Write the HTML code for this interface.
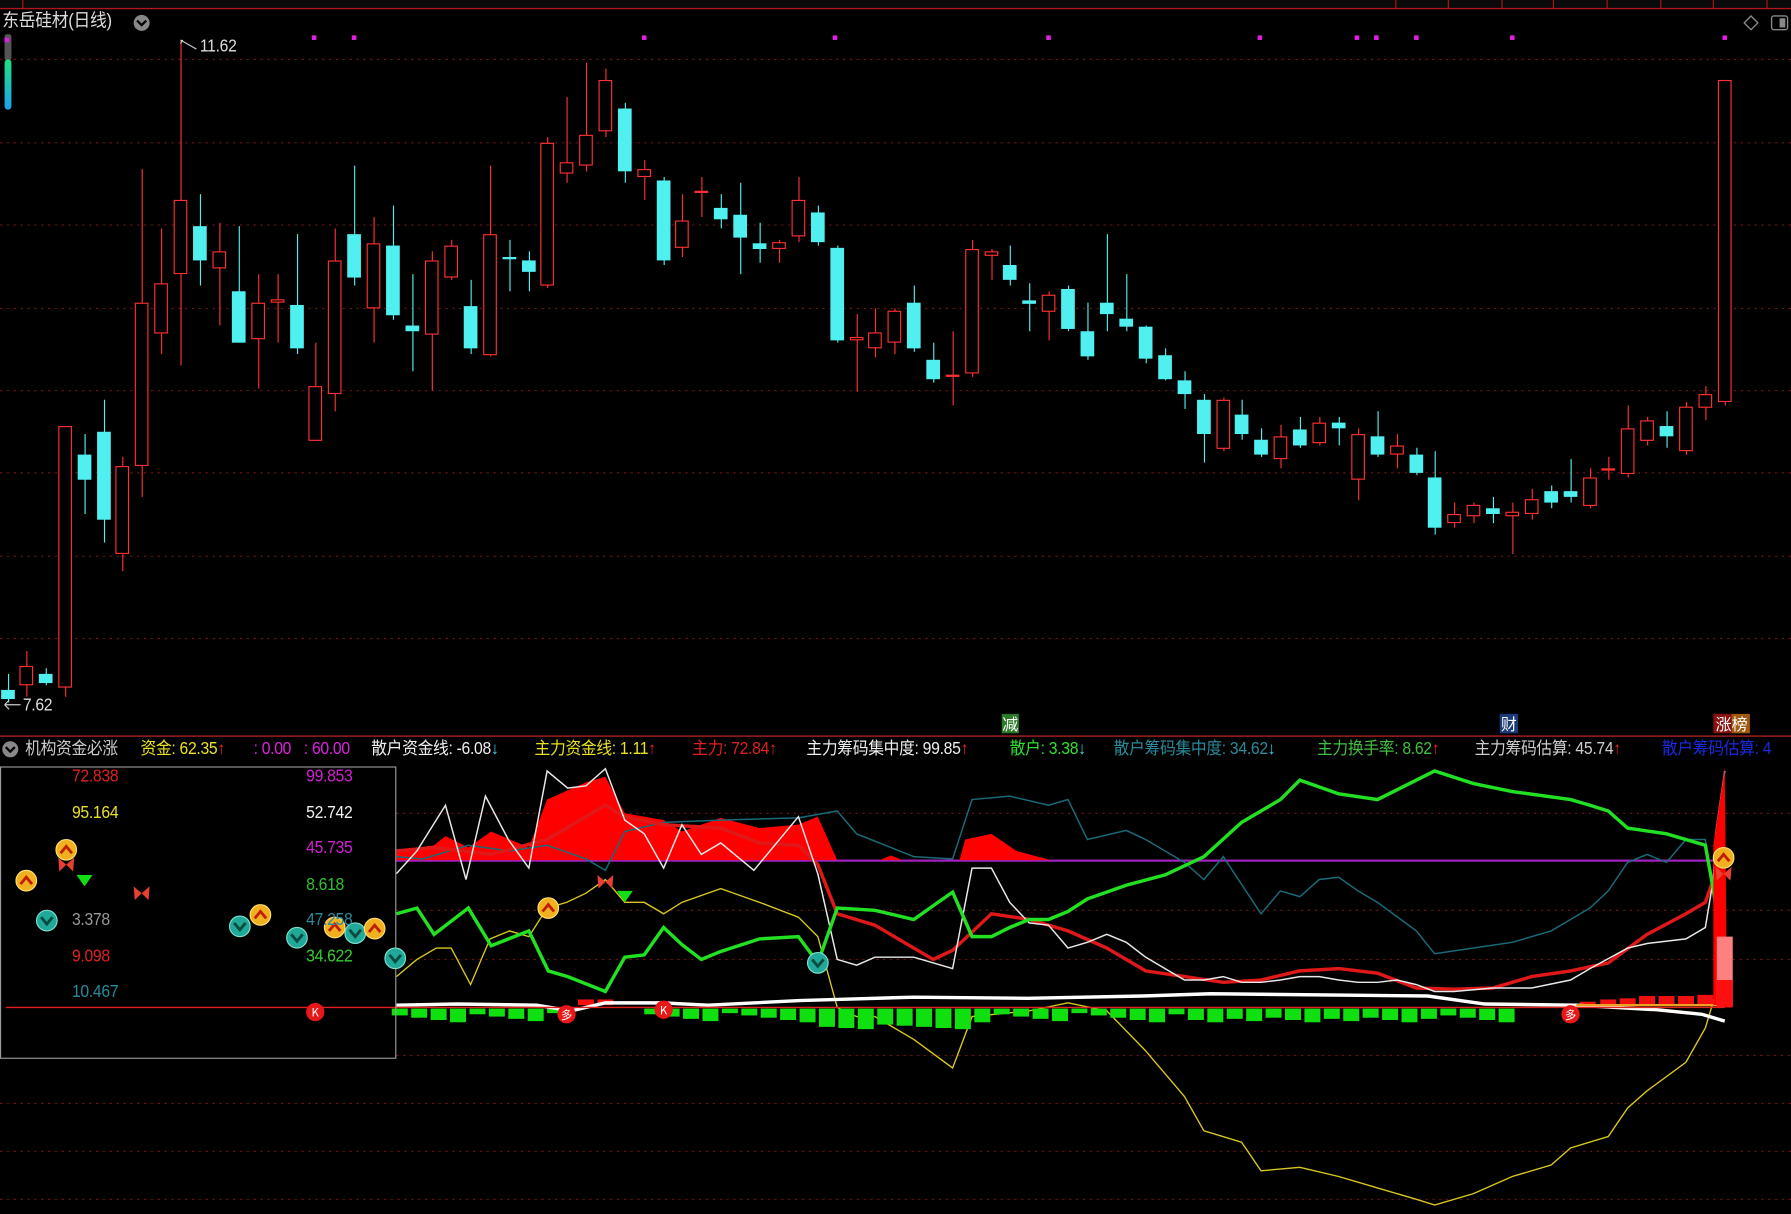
<!DOCTYPE html>
<html><head><meta charset="utf-8">
<style>
html,body{margin:0;padding:0;background:#000;width:1791px;height:1214px;overflow:hidden}
#w{position:absolute;left:0;top:0;width:1568px;height:1063px;transform:scale(1.14222);transform-origin:0 0;background:#000;font-family:"Liberation Sans","Noto Sans CJK SC",sans-serif}
.t{position:absolute;font-size:15px;white-space:nowrap;line-height:16px;letter-spacing:-0.3px;transform:scaleX(0.92);transform-origin:0 0}
svg{position:absolute;left:0;top:0}
</style></head><body>
<div id="w">
<svg id="s" width="1568" height="1063" viewBox="0 0 1568 1063">
<rect x="0" y="0" width="1568" height="7" fill="#0a0a0a"/>
<line x1="0" y1="7.5" x2="1568" y2="7.5" stroke="#b01818" stroke-width="1.2"/>
<g stroke="#b01818" stroke-width="1"><line x1="1222" y1="0" x2="1222" y2="7"/><line x1="1268" y1="0" x2="1268" y2="7"/><line x1="1315" y1="0" x2="1315" y2="7"/><line x1="1360" y1="0" x2="1360" y2="7"/><line x1="1407" y1="0" x2="1407" y2="7"/><line x1="1454" y1="0" x2="1454" y2="7"/><line x1="1500" y1="0" x2="1500" y2="7"/><line x1="1547" y1="0" x2="1547" y2="7"/><line x1="20" y1="0" x2="20" y2="7"/></g>
<g stroke="#6a1616" stroke-width="1" stroke-dasharray="2,4">
<line x1="0" y1="52" x2="1568" y2="52"/><line x1="0" y1="125" x2="1568" y2="125"/><line x1="0" y1="197" x2="1568" y2="197"/><line x1="0" y1="270" x2="1568" y2="270"/><line x1="0" y1="342" x2="1568" y2="342"/><line x1="0" y1="414" x2="1568" y2="414"/><line x1="0" y1="487" x2="1568" y2="487"/><line x1="0" y1="559" x2="1568" y2="559"/>
<line x1="347" y1="712" x2="1568" y2="712"/><line x1="347" y1="797" x2="1568" y2="797"/><line x1="347" y1="840" x2="1568" y2="840"/><line x1="347" y1="924" x2="1568" y2="924"/><line x1="0" y1="966" x2="1568" y2="966"/><line x1="0" y1="1008" x2="1568" y2="1008"/><line x1="0" y1="1050" x2="1568" y2="1050"/>
</g>
<line x1="0" y1="644.5" x2="1568" y2="644.5" stroke="#8a1a1a" stroke-width="1.5"/>
<defs><linearGradient id="gb" x1="0" y1="0" x2="0" y2="1"><stop offset="0" stop-color="#20e080"/><stop offset="1" stop-color="#20a0f0"/></linearGradient></defs>
<rect x="4" y="30" width="6" height="23" fill="#555" rx="2"/>
<rect x="4" y="52" width="6" height="44" fill="url(#gb)" rx="3"/>
<rect x="4" y="33" width="4" height="4" fill="#e020e0"/>
<g fill="#e020e0" id="md"></g>
<path d="M1533 14 L1539 20 L1533 26 L1527 20 Z" fill="none" stroke="#888" stroke-width="1.2"/>
<rect x="1551" y="14" width="14" height="12" rx="2" fill="none" stroke="#888" stroke-width="1.2"/><rect x="1558" y="16" width="5" height="8" fill="#888"/>
<g id="candles"></g>
<path d="M160 35 L158 38 M158 35 L172 43" stroke="#ccc" fill="none"/>
<path d="M4 617 L18 617 M4 617 L8 613 M4 617 L8 621" stroke="#ccc" fill="none"/>
<line x1="347" y1="753.5" x2="1510" y2="753.5" stroke="#a020c0" stroke-width="2"/>
<polygon fill="#ff0000" points="347,753 347,745 380,740 390,732 410,742 430,728 463,742 479,700 513,685 530,680 547,712 581,718 597,728 631,716 665,725 699,722 716,715 733,753 770,753 780,749 790,753 840,753 845,735 868,730 890,745 920,753"/>
<polyline fill="none" stroke="#1a6a78" stroke-width="1.3" points="347,750 370,752 410,740 446,745 479,740 513,752 530,762 547,728 581,720 631,718 699,716 733,710 750,730 800,750 834,752 851,700 884,697 918,705 935,700 952,735 986,727 1003,735 1020,745 1037,755 1054,770 1071,750 1104,800 1121,780 1138,785 1155,770 1172,768 1189,780 1206,790 1240,815 1256,835 1290,830 1324,825 1358,815 1375,805 1392,795 1408,780 1425,755 1442,748 1459,755 1476,735 1493,735 1502,800"/>
<polyline fill="none" stroke="#d8c820" stroke-width="1.2" points="347,855 365,840 382,830 395,830 412,862 429,822 446,815 463,820 479,795 496,790 513,782 530,770 547,790 564,790 581,800 597,790 631,778 665,790 699,803 716,820 733,882 750,890 766,890 800,910 834,935 851,890 901,885 935,878 969,885 1003,920 1020,940 1037,960 1054,990 1087,1000 1104,1025 1138,1022 1172,1030 1206,1040 1240,1050 1256,1055 1290,1045 1324,1030 1358,1020 1375,1005 1408,995 1425,970 1442,955 1476,930 1493,900 1502,870 1510,750"/>
<g id="hist"></g>
<polyline fill="none" stroke="#fff" stroke-width="3" points="347,880 400,879 470,880 500,885 530,878 580,878 620,880 700,876 733,875 800,873 900,874 1000,872 1060,870 1250,872 1300,879 1380,880 1450,884 1490,888 1510,894"/>
<line x1="5" y1="882" x2="1510" y2="882" stroke="#e02020" stroke-width="1.3"/>
<line x1="1380" y1="880" x2="1510" y2="880" stroke="#f0a020" stroke-width="2"/>
<polyline fill="none" stroke="#e01818" stroke-width="3" points="347,745 380,742 430,748 479,735 530,705 547,715 581,722 631,725 665,738 699,740 716,757 733,800 766,810 800,830 817,840 834,832 868,800 901,805 935,815 969,830 1003,850 1037,855 1071,860 1104,858 1138,850 1172,848 1206,852 1240,865 1273,866 1307,865 1341,855 1375,850 1408,843 1442,818 1476,800 1493,790 1500,770"/>
<polyline fill="none" stroke="#e8e8e8" stroke-width="1.3" points="347,765 365,745 390,705 408,770 425,697 445,735 463,760 479,675 497,690 513,688 530,673 547,718 564,730 581,760 597,722 614,748 631,738 660,762 699,715 716,765 733,840 750,845 766,838 800,838 834,848 851,760 868,760 884,790 901,808 918,810 935,830 952,825 969,818 986,825 1003,838 1020,848 1037,858 1054,858 1071,855 1087,860 1104,860 1121,858 1138,855 1155,855 1172,858 1189,860 1206,860 1223,858 1240,862 1256,868 1273,868 1307,865 1341,865 1375,858 1392,848 1425,830 1442,826 1476,822 1493,812 1500,770 1502,730 1510,675"/>
<polyline fill="none" stroke="#22e022" stroke-width="3" points="347,800 365,795 380,818 410,795 430,828 463,815 480,850 497,855 530,868 547,838 564,836 581,812 597,827 614,840 631,833 665,822 699,820 716,843 733,795 766,797 800,805 817,793 834,781 851,820 868,820 884,812 901,805 918,805 935,798 952,787 986,775 1020,766 1054,750 1087,720 1121,700 1138,683 1172,695 1206,700 1256,675 1290,686 1324,693 1375,700 1392,705 1408,710 1425,725 1459,730 1493,740 1502,790 1510,880"/>
<polygon fill="#ff0000" points="1500,880 1500,740 1510,672 1512,880"/>
<rect x="1503" y="820" width="14" height="60" fill="#ff8080"/><rect x="1503" y="858" width="14" height="24" fill="#ff1010"/>
<rect x="0.5" y="671.5" width="346" height="255" fill="none" stroke="#999" stroke-width="1"/>
<g id="mk"></g>
<rect x="877" y="625" width="15" height="17" fill="#2a7a2a"/><text x="884.5" y="639" font-size="14" fill="#fff" text-anchor="middle" font-family="Noto Sans CJK SC,sans-serif">减</text>
<rect x="1313" y="625" width="16" height="17" fill="#1a3a7a"/><text x="1321" y="639" font-size="14" fill="#fff" text-anchor="middle" font-family="Noto Sans CJK SC,sans-serif">财</text>
<rect x="1500" y="625" width="16" height="17" fill="#8a1010"/><rect x="1516" y="625" width="16" height="17" fill="#a05a10"/><text x="1516" y="639" font-size="14" fill="#fff" text-anchor="middle" font-family="Noto Sans CJK SC,sans-serif">涨榜</text>
<circle cx="9" cy="656" r="7" fill="#888"/><path d="M5 654 L9 658 L13 654" stroke="#000" stroke-width="2" fill="none"/>
<circle cx="124" cy="20" r="7" fill="#888"/><path d="M120 18 L124 22 L128 18" stroke="#000" stroke-width="2" fill="none"/>
</svg>
<div class="t" style="left:2px;top:11px;color:#ddd;font-size:16px">东岳硅材(日线)</div>
<div class="t" style="left:175px;top:33px;color:#ddd">11.62</div>
<div class="t" style="left:20px;top:610px;color:#ddd">7.62</div>
<div class="t" style="left:22px;top:648px;color:#ccc">机构资金必涨</div>
<div class="t" style="left:123px;top:648px;color:#e8e020">资金: 62.35<span style="color:#f02020">↑</span></div>
<div class="t" style="left:222px;top:648px;color:#e020e0">: 0.00</div>
<div class="t" style="left:266px;top:648px;color:#e020e0">: 60.00</div>
<div class="t" style="left:325px;top:648px;color:#eee">散户资金线: -6.08<span style="color:#40d0f0">↓</span></div>
<div class="t" style="left:468px;top:648px;color:#e8e020">主力资金线: 1.11<span style="color:#f02020">↑</span></div>
<div class="t" style="left:606px;top:648px;color:#e02020">主力: 72.84↑</div>
<div class="t" style="left:706px;top:648px;color:#eee">主力筹码集中度: 99.85<span style="color:#f02020">↑</span></div>
<div class="t" style="left:884px;top:648px;color:#30e030">散户: 3.38<span style="color:#40d0f0">↓</span></div>
<div class="t" style="left:975px;top:648px;color:#2a8a9a">散户筹码集中度: 34.62<span style="color:#40d0f0">↓</span></div>
<div class="t" style="left:1153px;top:648px;color:#40c040">主力换手率: 8.62<span style="color:#f02020">↑</span></div>
<div class="t" style="left:1291px;top:648px;color:#ccc">主力筹码估算: 45.74<span style="color:#f02020">↑</span></div>
<div class="t" style="left:1455px;top:648px;color:#1a2ae0">散户筹码估算: 4</div>
<div class="t" style="left:63px;top:672px;color:#e02020">72.838</div>
<div class="t" style="left:268px;top:672px;color:#d020d0">99.853</div>
<div class="t" style="left:63px;top:704px;color:#e8e020">95.164</div>
<div class="t" style="left:268px;top:704px;color:#eee">52.742</div>
<div class="t" style="left:268px;top:735px;color:#d020d0">45.735</div>
<div class="t" style="left:268px;top:767px;color:#30c030">8.618</div>
<div class="t" style="left:63px;top:798px;color:#999">3.378</div>
<div class="t" style="left:268px;top:798px;color:#2a8a9a">47.258</div>
<div class="t" style="left:63px;top:830px;color:#e02020">9.098</div>
<div class="t" style="left:268px;top:830px;color:#30d030">34.622</div>
<div class="t" style="left:63px;top:861px;color:#2a8a9a">10.467</div>
</div>
<script>
var NS="http://www.w3.org/2000/svg";
function el(p,n,a){var e=document.createElementNS(NS,n);for(var k in a)e.setAttribute(k,a[k]);p.appendChild(e);return e;}
var C=[[7,604,612,590,615,0],[23,583,600,570,610,1],[40,590,598,585,600,0],[57,373,602,373,610,1],[74,398,420,380,450,0],[91,378,455,350,475,0],[107,408,485,400,500,1],[124,265,408,148,435,1],[141,248,292,200,310,1],[158,175,240,35,320,1],[175,198,228,170,250,0],[192,220,235,195,285,1],[209,255,300,198,300,0],[226,265,297,240,340,1],[243,262,265,240,300,1],[260,267,305,205,310,0],[276,338,386,300,386,1],[293,228,345,200,360,1],[310,205,243,145,250,0],[327,213,270,190,300,1],[344,215,276,180,280,0],[361,285,290,240,325,0],[378,228,293,220,342,1],[395,215,243,210,245,1],[412,268,305,245,310,0],[429,205,311,145,312,1],[446,225,227,210,255,0],[463,228,238,220,255,0],[479,125,250,120,252,1],[496,142,152,85,160,1],[513,118,145,55,150,1],[530,70,115,60,120,1],[547,95,150,90,160,0],[564,148,155,140,175,1],[581,158,228,155,232,0],[597,193,217,170,225,1],[614,167,169,155,190,1],[631,182,192,170,200,0],[648,188,208,160,240,0],[665,213,218,195,230,0],[682,212,218,210,230,1],[699,175,207,155,212,1],[716,186,212,180,215,0],[733,217,298,215,300,0],[750,295,298,275,343,1],[766,291,305,270,313,1],[783,272,300,270,310,1],[800,265,305,250,308,0],[817,315,332,300,335,0],[834,328,330,290,355,1],[851,218,327,210,330,1],[868,220,224,218,245,1],[884,232,245,215,250,0],[901,263,266,248,290,0],[918,258,273,255,298,1],[935,253,288,250,290,0],[952,290,312,265,315,0],[969,265,275,205,290,0],[986,279,286,240,290,0],[1003,286,314,285,318,0],[1020,311,332,305,333,0],[1037,333,345,325,358,0],[1054,350,380,345,405,0],[1071,350,393,348,395,1],[1087,363,380,350,385,0],[1104,385,398,375,400,0],[1121,382,402,372,410,1],[1138,376,390,365,392,0],[1155,370,388,365,390,1],[1172,370,375,365,390,0],[1189,380,420,375,438,1],[1206,382,398,360,400,0],[1223,390,398,380,410,1],[1240,398,414,392,416,0],[1256,418,462,395,468,0],[1273,450,458,440,462,1],[1290,442,452,440,458,1],[1307,445,450,435,458,0],[1324,448,452,440,485,1],[1341,437,450,428,455,1],[1358,430,440,425,445,0],[1375,430,435,402,440,0],[1392,418,443,410,445,1],[1408,410,412,400,420,1],[1425,375,415,355,418,1],[1442,368,386,365,390,1],[1459,373,382,360,392,0],[1476,356,395,352,398,1],[1493,345,357,338,368,1],[1510,70,352,70,355,1]];
var g=document.getElementById("candles");
C.forEach(function(c){var col=c[5]?"#ff3030":"#50f0f0";
el(g,"line",{x1:c[0]+.5,x2:c[0]+.5,y1:c[3],y2:c[4],stroke:col,"stroke-width":1});
if(c[5])el(g,"rect",{x:c[0]-5.5,y:c[1]+.5,width:11,height:Math.max(1,c[2]-c[1]-1),fill:"#000",stroke:col,"stroke-width":1});
else el(g,"rect",{x:c[0]-6,y:c[1],width:12,height:Math.max(2,c[2]-c[1]),fill:col});});
var md=document.getElementById("md");[275,310,564,731,918,1103,1188,1205,1240,1324,1510].forEach(function(x){el(md,"rect",{x:x-2,y:31,width:4,height:4,fill:"#e020e0"});});
var h=document.getElementById("hist");
for(var x=350;x<1335;x+=17){var hh=4+((x*7)%9);if(x>720&&x<860)hh=14+((x*3)%5);if(x>1030&&x<1260)hh=8+((x)%5);if(x>495&&x<560)continue;
el(h,"rect",{x:x-7,y:883,width:14,height:hh,fill:"#10e010"});}
[[1390,3],[1408,5],[1425,6],[1442,8],[1459,8],[1476,8],[1493,9],[513,5],[530,5]].forEach(function(b){el(h,"rect",{x:b[0]-7,y:880-b[1],width:14,height:b[1],fill:"#f01010"});});
var mk=document.getElementById("mk");
function up(x,y){el(mk,"circle",{cx:x,cy:y,r:9,fill:"#f0b020",stroke:"#ffe070","stroke-width":1});el(mk,"path",{d:"M"+(x-5)+" "+(y+3)+" L"+x+" "+(y-3)+" L"+(x+5)+" "+(y+3),stroke:"#c02000","stroke-width":2.5,fill:"none"});}
function dn(x,y){el(mk,"circle",{cx:x,cy:y,r:9,fill:"#20a898",stroke:"#80e0d0","stroke-width":1});el(mk,"path",{d:"M"+(x-5)+" "+(y-3)+" L"+x+" "+(y+3)+" L"+(x+5)+" "+(y-3),stroke:"#0a4a40","stroke-width":2.5,fill:"none"});}
function bf(x,y){el(mk,"path",{d:"M"+x+" "+y+" L"+(x-7)+" "+(y-6)+" L"+(x-6)+" "+(y+6)+" Z M"+x+" "+y+" L"+(x+7)+" "+(y-6)+" L"+(x+6)+" "+(y+6)+" Z",fill:"#e84030"});}
function tri(x,y){el(mk,"path",{d:"M"+(x-7)+" "+(y-5)+" L"+(x+7)+" "+(y-5)+" L"+x+" "+(y+5)+" Z",fill:"#10e010"});}
function rc(x,y,t){el(mk,"circle",{cx:x,cy:y,r:8,fill:"#e81818"});var e=el(mk,"text",{x:x,y:y+4,"font-size":10,fill:"#fff","text-anchor":"middle","font-family":"Noto Sans CJK SC,sans-serif"});e.textContent=t;}
up(58,744);bf(58,757);up(23,771);tri(74,771);bf(124,782);dn(41,806);dn(210,811);up(228,801);dn(260,821);up(293,812);dn(311,817);up(328,813);dn(346,839);up(480,795);bf(530,772);tri(547,785);dn(716,843);up(1509,751);bf(1509,765);
rc(276,886,"K");rc(496,888,"多");rc(581,884,"K");rc(1375,888,"多");
</script>
</body></html>
